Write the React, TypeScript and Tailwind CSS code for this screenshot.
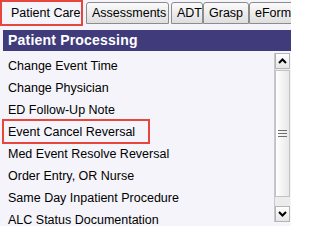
import React from "react";

const items = [
  "Change Event Time",
  "Change Physician",
  "ED Follow-Up Note",
  "Event Cancel Reversal",
  "Med Event Resolve Reversal",
  "Order Entry, OR Nurse",
  "Same Day Inpatient Procedure",
  "ALC Status Documentation",
];

function Tab({ label, w }: { label: string; w: string }) {
  return (
    <div
      className={`${w} h-[22px] mt-[2px] shrink-0 border border-[#8c8c8c] rounded-t-[3px] bg-gradient-to-b from-[#fbfbfb] to-[#dedede] flex items-center pl-[5px] text-[12.5px] text-black whitespace-nowrap overflow-hidden`}
    >
      {label}
    </div>
  );
}

export default function App() {
  return (
    <div
      className="w-[291px] h-[226px] bg-[#f4f4fa] overflow-hidden flex flex-col"
      style={{ fontFamily: '"Liberation Sans", Arial, sans-serif' }}
    >
      <div className="h-[26px] flex items-start">
        <div className="w-[83px] h-[26px] shrink-0 border-2 border-[#e8453c] bg-[#f4f4fa] flex items-center pl-[9px] text-[12.5px] text-black whitespace-nowrap">
          Patient Care
        </div>
        <div className="w-[3px] shrink-0" />
        <Tab label="Assessments" w="w-[83px]" />
        <Tab label="ADT" w="w-[32px] ml-[2px]" />
        <Tab label="Grasp" w="w-[46px]" />
        <Tab label="eForm" w="w-[46px]" />
      </div>
      <div className="h-[4px]" />
      <div className="ml-[3px] h-[21px] bg-[#403c7c] flex items-center pl-[5px] text-white font-bold text-[14px] tracking-[0.2px]">
        Patient Processing
      </div>
      <div className="flex flex-1 min-h-0">
        <div className="flex-1 pt-[4px] flex flex-col">
          {items.map((it, i) => (
            <div
              key={it}
              className="relative h-[22px] shrink-0 flex items-center pl-[8px] text-[12.5px] text-black whitespace-nowrap"
            >
              {it}
              {i === 3 && (
                <span className="absolute left-[2px] top-[-2px] w-[148px] h-[25px] border-2 border-[#e8453c]" />
              )}
            </div>
          ))}
        </div>
        <div className="w-[16px] mr-[1px] mt-[2px] mb-[4px] flex flex-col bg-[#ececec] border-l border-[#c8c8c8]">
          <div className="h-[16px] border border-[#b4b4b4] bg-gradient-to-b from-white to-[#e6e6e6] flex items-center justify-center">
            <svg width="9" height="6" viewBox="0 0 9 6">
              <path d="M1 5 L4.5 1.5 L8 5" stroke="#000" strokeWidth="2" fill="none" />
            </svg>
          </div>
          <div className="h-[127px] mt-[1px] border border-[#c2c2c2] bg-gradient-to-r from-white to-[#e8e8e8] flex flex-col items-center justify-center gap-[2px]">
            <div className="w-[9px] h-px bg-[#6e6e6e]" />
            <div className="w-[9px] h-px bg-[#6e6e6e]" />
            <div className="w-[9px] h-px bg-[#6e6e6e]" />
          </div>
          <div className="flex-1" />
          <div className="h-[16px] border border-[#b4b4b4] bg-gradient-to-b from-white to-[#e6e6e6] flex items-center justify-center">
            <svg width="9" height="6" viewBox="0 0 9 6">
              <path d="M1 1 L4.5 4.5 L8 1" stroke="#000" strokeWidth="2" fill="none" />
            </svg>
          </div>
        </div>
      </div>
    </div>
  );
}
